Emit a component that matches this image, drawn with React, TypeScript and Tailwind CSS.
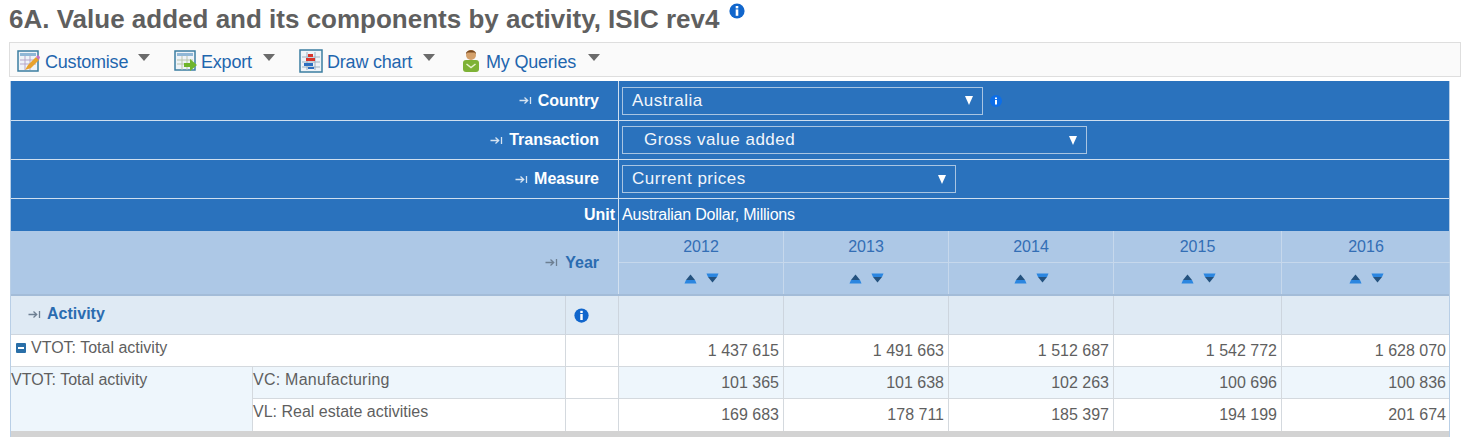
import React from 'react';

const years = ['2012', '2013', '2014', '2015', '2016'];
// column widths of the five year columns
const yearCols = ['w-[165px]', 'w-[165px]', 'w-[165px]', 'w-[168px]', 'w-[168px]'];

const rows = [
  { values: ['1 437 615', '1 491 663', '1 512 687', '1 542 772', '1 628 070'] },
  { values: ['101 365', '101 638', '102 263', '100 696', '100 836'] },
  { values: ['169 683', '178 711', '185 397', '194 199', '201 674'] },
];

const InfoIcon = ({ className }: { className: string }) => (
  <svg viewBox="0 0 16 16" className={className}>
    <circle cx="8" cy="8" r="7.6" fill="#1166cc" />
    <rect x="6.7" y="3" width="2.6" height="2.4" fill="#fff" />
    <rect x="6.7" y="6.4" width="2.6" height="6.4" fill="#fff" />
  </svg>
);

const PivotIcon = ({ color }: { color: string }) => (
  <svg viewBox="0 0 13 9" className="w-[13px] h-[9px] shrink-0">
    <path d="M0.5 4.5H8.5M5.5 1.5L8.7 4.5L5.5 7.5M11.5 1V8" fill="none" stroke={color} strokeWidth="1.3" />
  </svg>
);

const Caret = () => (
  <svg viewBox="0 0 12 7" className="w-[12px] h-[7px]">
    <path d="M0 0H12L6 7Z" fill="#6b6b6b" />
  </svg>
);

const SortIcons = () => (
  <div className="flex items-center justify-center gap-[9px] h-full pt-[1px] pl-[1px]">
    <svg viewBox="0 0 13 10" className="w-[13px] h-[10px]">
      <path d="M6.5 0.5L11 6H2Z" fill="#24527f" />
      <path d="M2 6H11L12.5 9.5H0.5Z" fill="#2b86e0" />
    </svg>
    <svg viewBox="0 0 13 10" className="w-[13px] h-[10px] -mt-[2px]">
      <path d="M0.5 0.5H12.5L11 4H2Z" fill="#2b86e0" />
      <path d="M2 4H11L6.5 9.5Z" fill="#24527f" />
    </svg>
  </div>
);

const CustomiseIcon = () => (
  <svg viewBox="0 0 24 24" className="w-[24px] h-[24px]">
    <rect x="1" y="2" width="20" height="20" fill="#eef3f8" stroke="#3b7ea1" strokeWidth="1.5" />
    <rect x="3" y="4" width="16" height="3" fill="#8fb7d6" />
    <path d="M3 11H19M3 15H19M8 7V21M13 7V21" stroke="#b5a7c9" strokeWidth="1" />
    <path d="M8 21L11 16L19 8L22 11L14 19Z" fill="#e8a22c" />
    <path d="M19 8L22 11L23 8L21 6Z" fill="#c86fc0" />
  </svg>
);

const ExportIcon = () => (
  <svg viewBox="0 0 24 24" className="w-[24px] h-[24px]">
    <rect x="1" y="2" width="20" height="19" fill="#eef3f8" stroke="#3b7ea1" strokeWidth="1.5" />
    <rect x="3" y="4" width="16" height="3" fill="#8fb7d6" />
    <path d="M3 11H19M3 15H19M8 7V21M13 7V21" stroke="#b9c5ad" strokeWidth="1" />
    <path d="M10 14H16V10L23 16L16 22V18H10Z" fill="#6fb52c" />
  </svg>
);

const ChartIcon = () => (
  <svg viewBox="0 0 24 24" className="w-[24px] h-[24px]">
    <rect x="1" y="1" width="22" height="22" fill="#eef3f8" stroke="#3b7ea1" strokeWidth="1.5" />
    <path d="M8 3V21M16 3V21M3 8H21M3 13H21M3 18H21" stroke="#9bb0c2" strokeWidth="1" />
    <rect x="9" y="5" width="5" height="3" fill="#d8342c" />
    <rect x="7" y="9" width="9" height="3" fill="#d8342c" />
    <rect x="5" y="14" width="9" height="3" fill="#2c6fc0" />
    <rect x="9" y="18" width="6" height="2" fill="#2c6fc0" />
  </svg>
);

const QueriesIcon = () => (
  <svg viewBox="0 0 18 24" className="w-[18px] h-[24px]">
    <circle cx="9" cy="6" r="5" fill="#d4a06a" />
    <path d="M4 5C4 0 14 0 14 5L12.5 3.5H5.5Z" fill="#7a4a20" />
    <rect x="1" y="11" width="16" height="12" rx="3" fill="#7eb236" />
    <path d="M4.5 15L9 18.5L13.5 15" fill="none" stroke="#e8f3cf" strokeWidth="1.5" />
  </svg>
);

const FilterRow = ({ label, value, width, height, pad, info }: { label: string; value: string; width: string; height: string; pad: string; info?: boolean }) => (
  <div className={`flex ${height} border-b border-[#cfdff0]`}>
    <div className="w-[608px] shrink-0 flex items-center justify-end gap-[6px] pr-[19px] border-r border-[#cfdff0]">
      <PivotIcon color="#d6e4f2" />
      <span className="text-[16px] font-bold text-white">{label}</span>
    </div>
    <div className="flex items-center pl-[3px]">
      <div className={`${width} h-[28px] flex items-center justify-between border border-[#a9c5e2] pr-[9px] ${pad}`}>
        <span className="text-[17px] tracking-[0.5px] text-[#f2f6fb]">{value}</span>
        <svg viewBox="0 0 8 9" className="w-[8px] h-[9px]">
          <path d="M0 0H8L4 9Z" fill="#fff" />
        </svg>
      </div>
      {info && (
        <svg viewBox="0 0 12 12" className="w-[12px] h-[12px] ml-[7px]">
          <circle cx="6" cy="6" r="6" fill="#0d6ee8" />
          <rect x="5" y="2.5" width="2" height="1.6" fill="#fff" />
          <rect x="5" y="5" width="2" height="4.5" fill="#fff" />
        </svg>
      )}
    </div>
  </div>
);

const YearCells = ({ render, className }: { render: (i: number) => React.ReactNode; className: string }) => (
  <>
    {yearCols.map((w, i) => (
      <div key={w + i} className={`${w} ${i < 4 ? 'border-r' : ''} shrink-0 ${className}`}>
        {render(i)}
      </div>
    ))}
  </>
);

const App = () => {
  return (
    <div className="w-[1464px] h-[437px] overflow-hidden bg-white font-['Liberation_Sans',Arial,sans-serif]">
      <div className="h-[42px] pl-[9px] pt-[2px] flex items-start">
        <h1 className="text-[26px] leading-[35px] font-bold text-[#5f5f5f]">6A. Value added and its components by activity, ISIC rev4</h1>
        <InfoIcon className="w-[16px] h-[16px] ml-[10px] mt-[1px]" />
      </div>

      <div className="ml-[9px] w-[1452px] h-[35px] border border-[#dedede] bg-[#fafafa] flex items-center pl-[7px] pt-[2px] text-[18px] tracking-[-0.2px] text-[#1f66ae]">
        <div className="flex items-center w-[157px]">
          <CustomiseIcon />
          <span className="ml-[4px] mt-[3px]">Customise</span>
          <span className="ml-[10px] -mt-[6px]"><Caret /></span>
        </div>
        <div className="flex items-center w-[125px]">
          <ExportIcon />
          <span className="ml-[3px] mt-[3px]">Export</span>
          <span className="ml-[11px] -mt-[6px]"><Caret /></span>
        </div>
        <div className="flex items-center w-[163px]">
          <ChartIcon />
          <span className="ml-[4px] mt-[3px]">Draw chart</span>
          <span className="ml-[11px] -mt-[6px]"><Caret /></span>
        </div>
        <div className="flex items-center">
          <QueriesIcon />
          <span className="ml-[6px] mt-[3px]">My Queries</span>
          <span className="ml-[12px] -mt-[6px]"><Caret /></span>
        </div>
      </div>

      <div className="mt-[4px] ml-[10px] w-[1440px] border-l border-r border-[#b9cfe6]">
        <div className="bg-[#2a72bd]">
          <FilterRow label="Country" value="Australia" width="w-[361px]" height="h-[40px]" pad="pl-[9px]" info />
          <FilterRow label="Transaction" value="Gross value added" width="w-[465px]" height="h-[39px]" pad="pl-[21px]" />
          <FilterRow label="Measure" value="Current prices" width="w-[334px]" height="h-[39px]" pad="pl-[9px]" />
          <div className="flex h-[32px]">
            <div className="w-[608px] shrink-0 flex items-center justify-end pr-[3px] border-r border-[#cfdff0] text-[16px] font-bold text-white">Unit</div>
            <div className="flex items-center pl-[3px] text-[16px] tracking-[-0.22px] text-white">Australian Dollar, Millions</div>
          </div>
        </div>

        <div className="flex bg-[#adc8e6] h-[65px] border-b-[2px] border-[#a3bcd8]">
          <div className="w-[608px] shrink-0 flex items-center justify-end gap-[7px] pr-[19px] border-r border-[#d3e1f0]">
            <PivotIcon color="#6d7f92" />
            <span className="text-[16px] font-bold text-[#2b6cb0]">Year</span>
          </div>
          <div className="flex flex-col">
            <div className="flex h-[32px] border-b border-[#c6d8ec]">
              <YearCells className="border-[#c6d8ec] flex items-center justify-center text-[16px] text-[#336eb5]" render={(i) => years[i]} />
            </div>
            <div className="flex flex-1">
              <YearCells className="border-[#c6d8ec]" render={() => <SortIcons />} />
            </div>
          </div>
        </div>

        <div className="flex h-[39px] bg-[#dfeaf4] border-b border-[#cfd6de]">
          <div className="w-[555px] shrink-0 flex items-center gap-[6px] pl-[17px] border-r border-[#cdd5de] pb-[2px]">
            <PivotIcon color="#6d7f92" />
            <span className="text-[16px] font-bold text-[#2b6cb0]">Activity</span>
          </div>
          <div className="w-[53px] shrink-0 flex items-center pl-[8px] border-r border-[#cdd5de]">
            <InfoIcon className="w-[15px] h-[15px]" />
          </div>
          <YearCells className="border-[#cdd5de]" render={() => null} />
        </div>

        <div className="flex h-[32px] bg-white border-b border-[#d4d9de] text-[16px] text-[#5f5f5f]">
          <div className="w-[555px] shrink-0 flex items-start pt-[1px] pl-[5px] border-r border-[#d4d9de]">
            <span className="w-[10px] h-[10px] mt-[7px] mr-[5px] bg-[#2a6fa8] rounded-[1px] flex items-center justify-center">
              <span className="w-[6px] h-[2px] bg-white" />
            </span>
            VTOT: Total activity
          </div>
          <div className="w-[53px] shrink-0 border-r border-[#d4d9de]" />
          <YearCells className="border-[#d4d9de] text-right pr-[4px] pt-[4px]" render={(i) => rows[0].values[i]} />
        </div>

        <div className="flex text-[16px] text-[#5f5f5f]">
          <div className="w-[241px] shrink-0 bg-[#eef6fc] pt-[1px] leading-[24px]">VTOT: Total activity</div>
          <div className="flex-1 min-w-0">
            <div className="flex h-[32px] bg-[#eef6fc] border-b border-[#d4d9de]">
              <div className="w-[314px] shrink-0 pt-[1px] tracking-[0.25px] border-l border-r border-[#d4d9de]">VC: Manufacturing</div>
              <div className="w-[53px] shrink-0 border-r border-[#d4d9de] bg-white" />
              <YearCells className="border-[#d4d9de] text-right pr-[4px] pt-[4px]" render={(i) => rows[1].values[i]} />
            </div>
            <div className="flex h-[32px] bg-white">
              <div className="w-[314px] shrink-0 pt-[1px] border-l border-r border-[#d4d9de]">VL: Real estate activities</div>
              <div className="w-[53px] shrink-0 border-r border-[#d4d9de]" />
              <YearCells className="border-[#d4d9de] text-right pr-[4px] pt-[4px]" render={(i) => rows[2].values[i]} />
            </div>
          </div>
        </div>
        <div className="h-[8px] bg-[#d3d3d3]" />
      </div>
    </div>
  );
};

export default App;
